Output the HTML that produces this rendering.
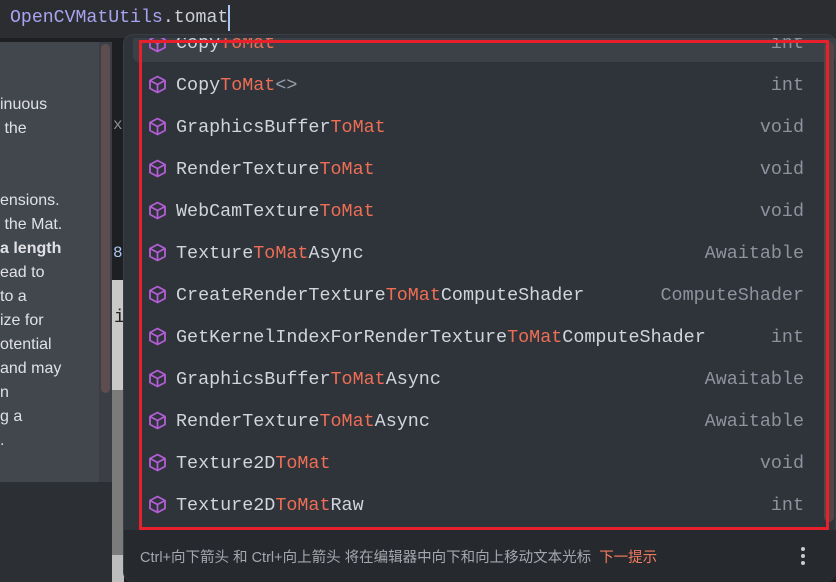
<!DOCTYPE html>
<html><head><meta charset="utf-8"><style>
*{margin:0;padding:0;box-sizing:border-box}
html,body{width:836px;height:582px;overflow:hidden}
body{background:#1e1f22;position:relative;font-family:"Liberation Sans","Noto Sans CJK SC",sans-serif}
.abs{position:absolute}
.mono{font-family:"Liberation Mono","DejaVu Sans Mono",monospace}
#top{left:0;top:0;width:836px;height:38px;background:#2b2d30}
#code{left:10px;top:6px;font-size:18.2px;color:#a9a3f0;white-space:pre;line-height:24px}
#code span{color:#cdd0d8}
#cur{left:228px;top:5px;width:2px;height:26px;background:#a8c8f0}
#doc{left:0;top:42px;width:112px;height:440px;background:#42464d;border-radius:0 8px 8px 0}
#docs{left:99px;top:42px;width:13px;height:440px;background:#3b3f45}
#dscroll{left:101px;top:44px;width:9px;height:349px;background:#5e4d4f;border-radius:5px}
#docb{left:0;top:482px;width:112px;height:100px;background:#2c2f33}
.dl{position:absolute;font-size:16px;color:#dfe1e5;white-space:pre;line-height:20px}
#strip1{left:112px;top:280px;width:12px;height:110px;background:#c9c9c9}
#strip2{left:112px;top:390px;width:12px;height:165px;background:#7b7b7b}
#strip3{left:112px;top:555px;width:12px;height:27px;background:#bdbdbd}
#pop{left:123px;top:34px;width:713px;height:548px;background:#2f333a;border-radius:10px 10px 10px 10px;border:1px solid #3a3e45;overflow:hidden}
#foot{left:124px;top:530px;width:712px;height:52px;background:#26292d;border-radius:0 0 10px 10px}
#clip{left:124px;top:38px;width:712px;height:492px;overflow:hidden}
#sel{left:9px;top:-4px;width:703px;height:28px;background:#3c4047;border-radius:6px}
#red{left:139px;top:40px;width:690px;height:490px;border:3px solid #e8202c}
#sb{left:824px;top:42px;width:10px;height:480px;background:#574546;border-radius:5px}
.row{position:absolute;left:52px;width:628px;height:24px;font-size:18.4px;line-height:24px;color:#d0d4dc;white-space:pre}
.row b{font-weight:normal;color:#ee6e55}
.row i{font-style:normal;color:#999fa8}
.row .t{position:absolute;right:0;top:0;color:#8b949e}
.ic{position:absolute;left:24px;width:19px;height:19px}
#ft{left:140px;top:546px;font-size:14.5px;color:#a4a7ad;white-space:pre}
#ft span{color:#f07a5e}
.dot{position:absolute;left:801px;width:4px;height:4px;border-radius:2px;background:#c8cace}
</style></head><body>
<div class="abs" id="top"></div>
<div class="abs mono" id="code">OpenCVMatUtils<span>.tomat</span></div>
<div class="abs" id="cur"></div>
<div class="abs" id="doc"></div>
<div class="abs" id="docs"></div>
<div class="abs" id="dscroll"></div>
<div class="abs" id="docb"></div>
<div class="dl" style="left:0;top:95px">inuous</div>
<div class="dl" style="left:0;top:119px"> the</div>
<div class="dl" style="left:0;top:191px">ensions.</div>
<div class="dl" style="left:0;top:215px"> the Mat.</div>
<div class="dl" style="left:0;top:239px;font-weight:bold">a length</div>
<div class="dl" style="left:0;top:263px">ead to</div>
<div class="dl" style="left:0;top:287px">to a</div>
<div class="dl" style="left:0;top:311px">ize for</div>
<div class="dl" style="left:0;top:335px">otential</div>
<div class="dl" style="left:0;top:359px">and may</div>
<div class="dl" style="left:0;top:383px">n</div>
<div class="dl" style="left:0;top:407px">g a</div>
<div class="dl" style="left:0;top:431px">.</div>
<div class="abs mono" style="left:113px;top:116px;color:#8a8e95;font-size:16px">x</div>
<div class="abs mono" style="left:113px;top:244px;color:#a8c8f0;font-size:16px">8</div>
<div class="abs" id="strip1"></div>
<div class="abs mono" style="left:114px;top:308px;color:#222;font-size:18px">i</div>
<div class="abs" id="strip2"></div>
<div class="abs" id="strip3"></div>
<div class="abs" id="pop"></div>
<div class="abs" id="foot"></div>

<svg width="0" height="0" style="position:absolute"><defs><g id="cube" fill="none" stroke="#b35ed6" stroke-width="1.8" stroke-linejoin="round"><path d="M9.5 1.5 L17 5.5 L17 13.5 L9.5 17.5 L2 13.5 L2 5.5 Z"/><path d="M2 5.5 L9.5 9.5 L17 5.5 M9.5 9.5 L9.5 17.5"/></g></defs></svg>

<div class="abs" id="clip">
<div class="abs" id="sel"></div>
<div class="row mono" style="top:-6px">Copy<b>ToMat</b><span class="t">int</span></div>
<div class="row mono" style="top:36px">Copy<b>ToMat</b><i>&lt;&gt;</i><span class="t">int</span></div>
<div class="row mono" style="top:78px">GraphicsBuffer<b>ToMat</b><span class="t">void</span></div>
<div class="row mono" style="top:120px">RenderTexture<b>ToMat</b><span class="t">void</span></div>
<div class="row mono" style="top:162px">WebCamTexture<b>ToMat</b><span class="t">void</span></div>
<div class="row mono" style="top:204px">Texture<b>ToMat</b>Async<span class="t">Awaitable</span></div>
<div class="row mono" style="top:246px">CreateRenderTexture<b>ToMat</b>ComputeShader<span class="t">ComputeShader</span></div>
<div class="row mono" style="top:288px">GetKernelIndexForRenderTexture<b>ToMat</b>ComputeShader<span class="t">int</span></div>
<div class="row mono" style="top:330px">GraphicsBuffer<b>ToMat</b>Async<span class="t">Awaitable</span></div>
<div class="row mono" style="top:372px">RenderTexture<b>ToMat</b>Async<span class="t">Awaitable</span></div>
<div class="row mono" style="top:414px">Texture2D<b>ToMat</b><span class="t">void</span></div>
<div class="row mono" style="top:456px">Texture2D<b>ToMat</b>Raw<span class="t">int</span></div>

<svg class="ic" style="top:-4px" viewBox="0 0 19 19"><use href="#cube"/></svg>
<svg class="ic" style="top:37px" viewBox="0 0 19 19"><use href="#cube"/></svg>
<svg class="ic" style="top:79px" viewBox="0 0 19 19"><use href="#cube"/></svg>
<svg class="ic" style="top:121px" viewBox="0 0 19 19"><use href="#cube"/></svg>
<svg class="ic" style="top:163px" viewBox="0 0 19 19"><use href="#cube"/></svg>
<svg class="ic" style="top:205px" viewBox="0 0 19 19"><use href="#cube"/></svg>
<svg class="ic" style="top:247px" viewBox="0 0 19 19"><use href="#cube"/></svg>
<svg class="ic" style="top:289px" viewBox="0 0 19 19"><use href="#cube"/></svg>
<svg class="ic" style="top:331px" viewBox="0 0 19 19"><use href="#cube"/></svg>
<svg class="ic" style="top:373px" viewBox="0 0 19 19"><use href="#cube"/></svg>
<svg class="ic" style="top:415px" viewBox="0 0 19 19"><use href="#cube"/></svg>
<svg class="ic" style="top:457px" viewBox="0 0 19 19"><use href="#cube"/></svg>
</div>
<div class="abs" id="sb"></div>

<div class="abs" id="red"></div>
<div class="abs" id="ft">Ctrl+向下箭头 和 Ctrl+向上箭头 将在编辑器中向下和向上移动文本光标  <span>下一提示</span></div>
<div class="dot" style="top:547px"></div>
<div class="dot" style="top:554px"></div>
<div class="dot" style="top:561px"></div>
</body></html>
